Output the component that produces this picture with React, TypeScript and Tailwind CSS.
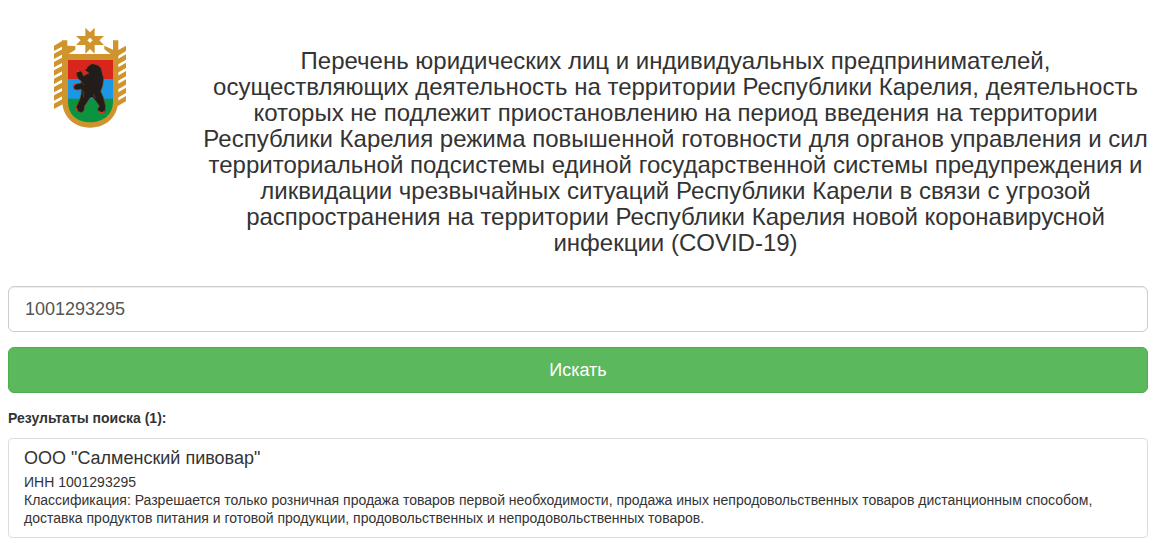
import { useState } from "react"

const results = [
  {
    name: 'ООО "Салменский пивовар"',
    inn: "1001293295",
    classification:
      "Разрешается только розничная продажа товаров первой необходимости, продажа иных непродовольственных товаров дистанционным способом, доставка продуктов питания и готовой продукции, продовольственных и непродовольственных товаров.",
  },
]

const leftBranches = [89, 114, 139, 164, 189, 214, 239]
const rightBranches = [91, 116, 141, 166, 191, 216]

function Emblem() {
  return (
    <svg viewBox="12 9 219 303" className="w-[73px] h-[101px]" role="img" aria-label="Герб Республики Карелия">
      <g fill="#d0942c">
        {/* Star */}
        <path
          fillRule="evenodd"
          d="M106 11l14 14 14-14v25h28l-14 13 14 14h-28v26l-14-14-14 14V63H78l14-14-14-13h28zM120 41l-8 8 8 8 8-8z"
        />
        {/* Trees */}
        <path d="M36 49h16v16l24 1v11L52 92H36V68L12 81V65l24-14z" />
        <path d="M189 49h16v29l23-13v16l-23 14h-16l-26-19V65l26 12z" />
        {leftBranches.map((y) => (
          <path key={y} d={`M12 ${y}l26-14v16l-26 14z`} />
        ))}
        {rightBranches.map((y) => (
          <path key={y} d={`M228 ${y}l-26 15v16l26-15z`} />
        ))}
        <path d="M36 90h169v136c0 50-34 85-85 85s-84-35-84-85z" />
      </g>

      {/* Shield */}
      <path fill="#0b9440" d="M54 222h135v10c0 40-28 63-69 63s-66-23-66-63z" />
      <path fill="#da251d" d="M54 108h135v58H54z" />
      <path fill="#1c97e6" d="M54 165h135v59H54z" />

      {/* Bear */}
      <g transform="translate(60 108)">
        <path
          fill="#221c1a"
          stroke="#7d4a1c"
          strokeWidth="2"
          strokeLinejoin="round"
          d="M52 22L60 14 68 11 84 16 93 24 97 40 101 55 98 78 92 94 100 112 107 138 105 156 95 160 85 154 83 146 88 138 78 124 68 112 60 114 52 126 44 138 42 152 34 158 22 153 17 142 23 132 30 116 34 100 33 87 24 90 13 88 10 80 18 72 32 70 34 64 26 58 20 47 20 36 29 31 37 38 40 47 50 43 56 38 48 34 44 28z"
        />
        <path
          fill="none"
          stroke="#7d4a1c"
          strokeWidth="2"
          d="M40 47l12-6 6 1M34 88l8 10-2 14M34 66l9 9M76 114l-6-12"
        />
        <path
          fill="none"
          stroke="#e8322a"
          strokeWidth="4"
          d="M18 136l-1 8 6 8M86 154l9 5 9-5M20 36l4-4 5 3M11 82l-1-6 6-4M46 27l5-3"
        />
      </g>
    </svg>
  )
}

export default function App() {
  const [query, setQuery] = useState("1001293295")

  return (
    <div className="min-h-screen overflow-x-hidden bg-white pr-[9px] pb-1 pl-2 font-['Liberation_Sans',Arial,sans-serif] text-sm leading-[18px] text-[#333]">
      {/* Header */}
      <header className="-mx-[15px] flex pt-[27px]">
        <div className="flex w-1/6 shrink-0 justify-center px-[15px]">
          <Emblem />
        </div>
        <div className="flex-1 px-[15px] pt-[21px]">
          <h1 className="text-center text-2xl leading-[26px]">
            Перечень юридических лиц и индивидуальных предпринимателей, осуществляющих деятельность на территории
            Республики Карелия, деятельность которых не подлежит приостановлению на период введения на территории
            Республики Карелия режима повышенной готовности для органов управления и сил территориальной подсистемы
            единой государственной системы предупреждения и ликвидации чрезвычайных ситуаций Республики Карели в связи
            с угрозой распространения на территории Республики Карелия новой коронавирусной инфекции (COVID-19)
          </h1>
        </div>
      </header>

      {/* Search */}
      <form className="mt-[30px] flex flex-col gap-[15px]" onSubmit={(e) => e.preventDefault()}>
        <input
          type="text"
          aria-label="ИНН"
          value={query}
          onChange={(e) => setQuery(e.target.value)}
          className="h-[46px] w-full rounded-md border border-[#ccc] px-4 text-lg text-[#555] shadow-[inset_0_1px_1px_rgba(0,0,0,0.075)] outline-none"
        />
        <button
          type="submit"
          className="h-[46px] w-full rounded-md border border-[#4cae4c] bg-[#5cb85c] text-lg text-white hover:bg-[#449d44]"
        >
          Искать
        </button>
      </form>

      {/* Results */}
      <h2 className="mt-4 font-bold">{`Результаты поиска (${results.length}):`}</h2>
      <ul className="mt-[11px]">
        {results.map((item) => (
          <li key={item.inn} className="rounded border border-[#ddd] px-[15px] pt-[9px] pb-[10px]">
            <h3 className="mb-[5px] text-lg leading-5">{item.name}</h3>
            <p>{`ИНН ${item.inn}`}</p>
            <p>{`Классификация: ${item.classification}`}</p>
          </li>
        ))}
      </ul>
    </div>
  )
}
